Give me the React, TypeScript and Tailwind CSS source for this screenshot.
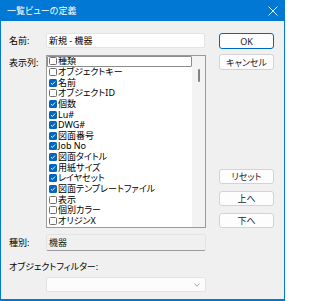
import clsx from "clsx";

const items: { label: string; checked: boolean }[] = [
  { label: "種類", checked: false },
  { label: "オブジェクトキー", checked: false },
  { label: "名前", checked: true },
  { label: "オブジェクトID", checked: false },
  { label: "個数", checked: true },
  { label: "Lu#", checked: true },
  { label: "DWG#", checked: true },
  { label: "図面番号", checked: true },
  { label: "Job No", checked: true },
  { label: "図面タイトル", checked: true },
  { label: "用紙サイズ", checked: true },
  { label: "レイヤセット", checked: true },
  { label: "図面テンプレートファイル", checked: true },
  { label: "表示", checked: false },
  { label: "個別カラー", checked: false },
  { label: "オリジンX", checked: false },
];

function CheckBox({ checked }: { checked: boolean }) {
  return checked ? (
    <span className="flex h-[8px] w-[8px] shrink-0 items-center justify-center rounded-[1.5px] bg-[#0067c0]">
      <svg width="6" height="6" viewBox="0 0 6 6">
        <polyline points="1,3.2 2.4,4.5 5,1.6" fill="none" stroke="white" strokeWidth="0.9" />
      </svg>
    </span>
  ) : (
    <span className="h-[8px] w-[8px] shrink-0 rounded-[1.5px] border border-[#6f6f6f] bg-white" />
  );
}

function Btn({ children, primary, h = "h-[16px]" }: { children: React.ReactNode; primary?: boolean; h?: string }) {
  return (
    <button
      className={clsx(
        "flex w-[55px] items-center justify-center rounded-[3px] border bg-[#fdfdfd] text-[9px] leading-none text-[#1b1b1b]",
        h,
        primary ? "border-[#0067c0]" : "border-[#d3d3d3]",
      )}
    >
      {children}
    </button>
  );
}

export default function App() {
  return (
    <div className="flex h-[301px] w-[285px] flex-col bg-[#0078d4] font-['Noto_Sans','Noto_Sans_CJK_JP',sans-serif] [font-feature-settings:'palt'] text-[9px] text-black">
      <div className="flex h-[21px] shrink-0 items-center justify-between pl-[7px] pr-[7px] text-white">
        <span className="leading-none">一覧ビューの定義</span>
        <svg width="10" height="10" viewBox="0 0 10 10">
          <path d="M0.5 0.5 L9.5 9.5 M9.5 0.5 L0.5 9.5" stroke="white" strokeWidth="0.9" />
        </svg>
      </div>

      <div className="mx-[1px] mb-[2px] flex flex-1 bg-[#f0f0f0]">
        <div className="flex w-[206px] flex-col pt-[12px]">
          <div className="flex h-[15px] items-center pl-[8px]">
            <span className="w-[37px]">名前:</span>
            <div className="flex h-[15px] w-[159px] items-center rounded-[2px] border border-[#e3e3e3] bg-white pl-[2px]">
              新規 - 機器
            </div>
          </div>

          <div className="mt-[7px] flex pl-[8px]">
            <span className="w-[37px] pt-[1px]">表示列:</span>
            <div className="flex h-[173px] w-[160px] overflow-hidden border border-[#9a9a9a] bg-white">
              <div className="flex flex-1 flex-col">
                {items.map((it, i) => (
                  <div
                    key={it.label}
                    className={clsx(
                      "flex h-[10.65px] shrink-0 items-center gap-[1px] pl-[2px] leading-[10px]",
                      i === 0 && "rounded-[1px] outline outline-1 -outline-offset-1 outline-[#8c8c8c]",
                    )}
                  >
                    <CheckBox checked={it.checked} />
                    <span className="whitespace-nowrap">{it.label}</span>
                  </div>
                ))}
              </div>
              <div className="flex w-[13px] shrink-0 justify-center bg-[#f3f3f3] pt-[13px]">
                <div className="h-[13px] w-[2px] rounded-full bg-[#838383]" />
              </div>
            </div>
          </div>

          <div className="mt-[6px] flex items-center pl-[8px]">
            <span className="w-[37px]">種別:</span>
            <div className="flex h-[17px] w-[160px] items-center rounded-[2px] border border-[#e4e4e4] border-b-[#9b9b9b] bg-[#f0f0f0] pl-[2px] text-[#1b1b1b]">
              機器
            </div>
          </div>

          <div className="mt-[10px] h-[12px] pl-[8px] leading-[12px]">オブジェクトフィルター:</div>

          <div className="ml-[45px] mt-[4px] flex h-[15px] w-[160px] items-center justify-end rounded-[2px] border border-[#e3e3e3] bg-[#fcfcfc] pr-[5px]">
            <svg width="6" height="4" viewBox="0 0 6 4">
              <polyline points="0.5,0.8 3,3.2 5.5,0.8" fill="none" stroke="#8a8a8a" strokeWidth="0.8" />
            </svg>
          </div>
        </div>

        <div className="ml-[12px] flex w-[55px] flex-col pt-[12px]">
          <Btn primary>OK</Btn>
          <div className="mt-[5px]">
            <Btn>キャンセル</Btn>
          </div>
          <div className="mt-[99px]">
            <Btn h="h-[15px]">リセット</Btn>
          </div>
          <div className="mt-[7px]">
            <Btn h="h-[15px]">上へ</Btn>
          </div>
          <div className="mt-[7px]">
            <Btn h="h-[15px]">下へ</Btn>
          </div>
        </div>
      </div>
    </div>
  );
}
